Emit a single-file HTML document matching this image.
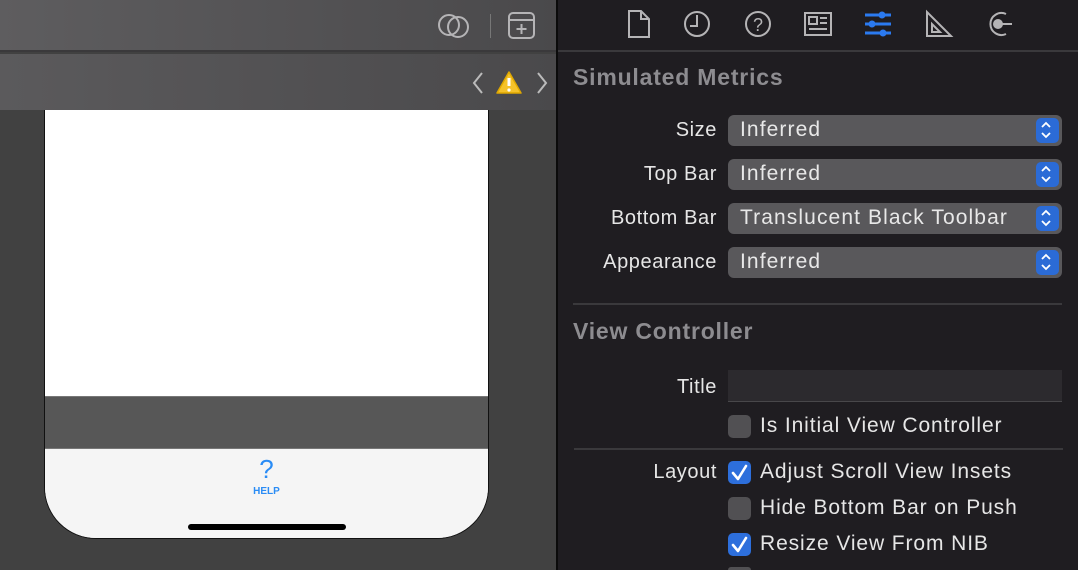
<!DOCTYPE html>
<html><head><style>
*{margin:0;padding:0;box-sizing:border-box}
html,body{width:1078px;height:570px;overflow:hidden}
body{background:#1f1d21;font-family:"Liberation Sans",sans-serif;position:relative}
.left{position:absolute;left:0;top:0;width:556px;height:570px;background:#414141}
.tb1{position:absolute;left:0;top:0;width:556px;height:52px;background:linear-gradient(90deg,#5e5d5f,#4a494b);border-bottom:2px solid #3a393b}
.tb2{position:absolute;left:0;top:54px;width:556px;height:56px;background:linear-gradient(90deg,#5b5a5c,#4a494b)}
.div{position:absolute;left:556px;top:0;width:2px;height:570px;background:#0b0b0b}
.rhead{position:absolute;left:558px;top:0;width:520px;height:52px;border-bottom:2px solid #3a393c}
.phone{position:absolute;left:44px;top:110px;width:445px;height:429px;border:1.5px solid #111;border-top:none;border-radius:0 0 52px 52px;overflow:hidden;background:#fff}
.band{position:absolute;left:0;top:286px;width:100%;height:53px;background:#575757;border-top:1px solid #777;border-bottom:1px solid #777}
.tab{position:absolute;left:0;top:339px;width:100%;height:90px;background:#f5f5f5}
.help{position:absolute;left:0;width:100%;text-align:center;color:#2a8cf5}
.home{position:absolute;left:143px;top:75px;width:158px;height:6px;border-radius:3px;background:#000}
.t{position:absolute;color:#e6e6e6;font-size:21px;letter-spacing:0.9px;white-space:nowrap}
.lab{position:absolute;right:361px;color:#e6e6e6;font-size:20px;letter-spacing:0.6px;text-align:right;white-space:nowrap}
.sec{position:absolute;left:573px;color:#8d8c90;font-size:23px;letter-spacing:0.8px;font-weight:bold;white-space:nowrap}
.pop{position:absolute;left:728px;width:334px;height:31px;border-radius:6px;background:#59585b;color:#e8e8e8;font-size:21px;letter-spacing:1.1px;padding:3px 0 0 12px;white-space:nowrap}
.pop i{position:absolute;right:3px;top:3px;width:23px;height:25px;border-radius:5px;background:#2b6bd6;font-style:normal}
.sep{position:absolute;left:573px;width:489px;height:2px;background:#3a393c}
.cb{position:absolute;left:728px;width:23px;height:23px;border-radius:5px;background:#515053}
.cb.on{background:#2d6fdc}
</style></head><body>
<div class="left">
<div class="tb1">
<svg style="position:absolute;left:436px;top:10px" width="36" height="32" viewBox="0 0 36 32"><circle cx="13" cy="15" r="10" fill="none" stroke="#b5b4b6" stroke-width="2"/><circle cx="22" cy="17" r="10" fill="none" stroke="#b5b4b6" stroke-width="2"/></svg>
<div style="position:absolute;left:490px;top:14px;width:1px;height:24px;background:#777"></div>
<svg style="position:absolute;left:507px;top:11px" width="30" height="30" viewBox="0 0 30 30"><rect x="2" y="2" width="25" height="25" rx="4" fill="none" stroke="#b5b4b6" stroke-width="2"/><path d="M2 9H27M14.5 13V23M9.5 18H19.5" stroke="#b5b4b6" stroke-width="2"/></svg>
</div>
<div class="tb2">
<svg style="position:absolute;left:470px;top:16px" width="80" height="26" viewBox="0 0 80 26"><path d="M12 3L4 13L12 23" fill="none" stroke="#bbb" stroke-width="2"/><path d="M68 3L76 13L68 23" fill="none" stroke="#bbb" stroke-width="2"/><path d="M39 2L51 23H27Z" fill="#f5c22a" stroke="#e0a800" stroke-width="1.5" stroke-linejoin="round"/><path d="M39 8V16" stroke="#fff" stroke-width="3"/><circle cx="39" cy="20" r="1.6" fill="#fff"/></svg>
</div>
<div class="phone">
<div class="band"></div>
<div class="tab">
<div class="help" style="top:5px;font-size:26px">?</div>
<div class="help" style="top:37px;font-size:10px;font-weight:bold">HELP</div>
<div class="home"></div>
</div>
</div>
</div>
<div class="div"></div>
<div class="rhead">
<svg width="520" height="52" viewBox="558 0 520 52" style="position:absolute;left:0;top:0" fill="none" stroke="#b5b4b6" stroke-width="2">
<path d="M629 11H641L649 19V37H629Z M641 11V19H649"/>
<circle cx="697" cy="24" r="12"/><path d="M697 15V26H690"/>
<circle cx="758" cy="24" r="12"/><text x="758" y="31" font-size="18" fill="#b5b4b6" stroke="none" text-anchor="middle" font-family="Liberation Sans">?</text>
<rect x="805" y="13" width="26" height="22"/><rect x="809" y="17" width="8" height="7"/><path d="M820 18H827M820 23H827M809 29H827"/>
<g stroke="#2b7af0" stroke-width="3"><path d="M865 15H891M865 24H891M865 33H891"/></g>
<g fill="#2b7af0" stroke="none"><circle cx="882" cy="15" r="3.5"/><circle cx="872" cy="24" r="3.5"/><circle cx="883" cy="33" r="3.5"/></g>
<path d="M927 12V36H951Z M932 24V32H940Z"/>
<path d="M1006 14A11 11 0 1 0 1006 34"/><circle cx="998" cy="24" r="4" fill="#b5b4b6"/><path d="M1000 24H1012"/>
</svg>
</div>
<div class="sec" style="top:64px">Simulated Metrics</div>
<div class="lab" style="top:119px">Size</div>
<div class="lab" style="top:163px">Top Bar</div>
<div class="lab" style="top:207px">Bottom Bar</div>
<div class="lab" style="top:251px">Appearance</div>
<div class="pop" style="top:115px">Inferred<i></i></div>
<div class="pop" style="top:159px">Inferred<i></i></div>
<div class="pop" style="top:203px">Translucent Black Toolbar<i></i></div>
<div class="pop" style="top:247px">Inferred<i></i></div>
<div class="sep" style="top:303px"></div>
<div class="sec" style="top:318px">View Controller</div>
<div class="lab" style="top:376px">Title</div>
<div style="position:absolute;left:728px;top:370px;width:334px;height:32px;background:#2c2a2e;border-bottom:1px solid #48474a"></div>
<div class="cb" style="top:415px"></div><div class="t" style="left:760px;top:414px">Is Initial View Controller</div>
<div class="sep" style="top:448px;left:574px"></div>
<div class="lab" style="top:461px">Layout</div>
<div class="cb on" style="top:461px"></div><div class="t" style="left:760px;top:460px">Adjust Scroll View Insets</div>
<div class="cb" style="top:497px"></div><div class="t" style="left:760px;top:496px">Hide Bottom Bar on Push</div>
<div class="cb on" style="top:533px"></div><div class="t" style="left:760px;top:532px">Resize View From NIB</div>
<div class="cb" style="top:567px;height:3px;border-radius:5px 5px 0 0"></div>
<svg style="position:absolute;left:728px;top:461px" width="23" height="95" viewBox="0 0 23 95" fill="none" stroke="#fff" stroke-width="2.6" stroke-linecap="round" stroke-linejoin="round"><path d="M5 12L10 18L18 5"/><path d="M5 84L10 90L18 77"/></svg>
<svg style="position:absolute;left:1031px;top:115px" width="30" height="160" viewBox="0 0 30 160" fill="none" stroke="#fff" stroke-width="1.8"><path d="M11 12L15 8L19 12M11 18L15 22L19 18"/><path d="M11 56L15 52L19 56M11 62L15 66L19 62"/><path d="M11 100L15 96L19 100M11 106L15 110L19 106"/><path d="M11 144L15 140L19 144M11 150L15 154L19 150"/></svg>
</body></html>
